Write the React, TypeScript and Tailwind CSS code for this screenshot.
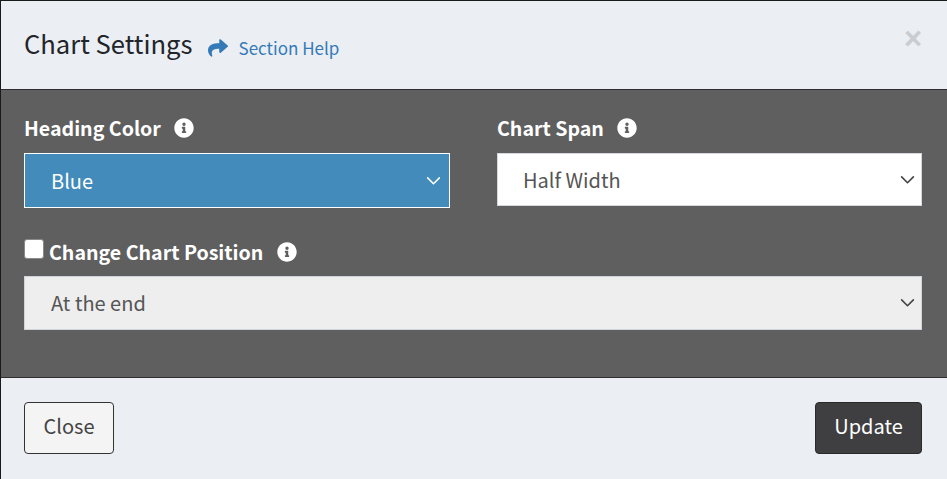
function Info() {
  return (
    <svg viewBox="0 0 512 512" className="w-[20px] h-[20px] fill-white shrink-0">
      <path d="M256 8C119 8 8 119 8 256s111 248 248 248 248-111 248-248S393 8 256 8zm0 110c23.200 0 42 18.800 42 42s-18.800 42-42 42-42-18.800-42-42 18.800-42 42-42zm56 254c0 6.600-5.400 12-12 12h-88c-6.600 0-12-5.400-12-12v-24c0-6.600 5.400-12 12-12h12v-64h-12c-6.600 0-12-5.400-12-12v-24c0-6.600 5.400-12 12-12h64c6.600 0 12 5.400 12 12v100h12c6.600 0 12 5.400 12 12v24z" />
    </svg>
  );
}
function Chevron({ cls }: { cls: string }) {
  return (
    <svg viewBox="0 0 16 10" className={"absolute top-1/2 -translate-y-1/2 w-[15px] h-[9px] fill-none pointer-events-none " + cls} strokeWidth="1.8" strokeLinecap="round" strokeLinejoin="round">
      <path d="M1.500 1.500 L8 8 L14.500 1.500" />
    </svg>
  );
}
function Select({ value, wrap, box, chev }: { value: string; wrap: string; box: string; chev: string }) {
  return (
    <div className={"relative " + wrap}>
      <select defaultValue={value} className={"block w-full appearance-none rounded-none outline-none border text-[20px] leading-[30px] " + box}>
        <option>{value}</option>
      </select>
      <Chevron cls={chev} />
    </div>
  );
}
export default function App() {
  return (
    <div className="w-[947px] h-[479px] bg-[#1a1a1a] overflow-hidden font-['Noto_Sans_CJK_SC','Noto_Sans',sans-serif]">
      <div className="w-[946px] h-[478px] ml-[1px] mt-[1px] flex flex-col">
        <header className="h-[89px] shrink-0 bg-[#ebeef3] border-b border-[#2e2e2e] flex items-start pl-[23px] pr-[25px]">
          <h1 className="text-[25.6px] leading-[40px] mt-[22px] text-[#212529] font-normal">Chart Settings</h1>
          <a className="flex items-center ml-[15px] mt-[31px] text-[#337ab7] text-[17px] leading-[32px]">
            <svg viewBox="0 0 512 512" className="w-[20px] h-[20px] fill-[#337ab7] mr-[11px]">
              <path d="M503.700 189.800 327.700 37.900C312.300 24.600 288 35.400 288 56v80.100C127.400 137.900 0 170.100 0 322.300c0 61.400 39.600 122.300 83.300 154.100 13.700 9.900 33.100-2.500 28.100-18.600C66 312.300 132.900 274.300 288 272.100V360c0 20.700 24.300 31.400 39.700 18.200l176-152c11.100-9.600 11.100-26.800 0-36.400z" />
            </svg>
            Section Help
          </a>
          <span className="ml-auto mt-[20px] text-[31px] leading-[36px] font-bold font-['Liberation_Sans'] text-[#c9ccd0]">×</span>
        </header>
        <main className="h-[288px] shrink-0 bg-[#5f5f5f] border-b border-[#2e2e2e] pt-[23px] pl-[23px] pr-[24px]">
          <div className="flex gap-[47px]">
            <div className="w-[426px]">
              <div className="flex items-center h-[30px] gap-[13px] text-white font-bold text-[19.6px] leading-[30px]">
                Heading Color <Info />
              </div>
              <Select value="Blue" wrap="mt-[10px]" box="h-[55px] pl-[26px] bg-[#428bba] border-white text-white" chev="stroke-white right-[9px]" />
            </div>
            <div className="w-[425px]">
              <div className="flex items-center h-[30px] gap-[13px] text-white font-bold text-[19.6px] leading-[30px]">
                Chart Span <Info />
              </div>
              <Select value="Half Width" wrap="mt-[10px]" box="h-[53px] pl-[25px] bg-white border-[#d5d8dc] text-[#555555]" chev="stroke-[#444444] right-[7px]" />
            </div>
          </div>
          <div className="flex items-center h-[30px] mt-[29px] text-white font-bold text-[19.6px] leading-[30px]">
            <span className="w-[20px] h-[20px] mb-[6px] bg-white rounded-[3px] border border-[#8a8a8a] mr-[5px] shrink-0" />
            Change Chart Position
            <span className="ml-[14px]"><Info /></span>
          </div>
          <Select value="At the end" wrap="mt-[9px] w-[898px]" box="h-[54px] pl-[26px] bg-[#eeeeee] border-[#ced4da] text-[#555555]" chev="stroke-[#444444] right-[7px]" />
        </main>
        <footer className="flex-1 bg-[#ebeef3] flex items-start justify-between pt-[24px] pl-[23px] pr-[25px]">
          <button className="w-[90px] h-[52px] pb-[4px] bg-[#f4f4f4] border border-[#333333] rounded-[4px] text-[#444444] text-[20px] leading-[30px]">Close</button>
          <button className="w-[107px] h-[52px] pb-[4px] bg-[#3f3f41] border border-[#2a2a2a] rounded-[4px] text-white text-[20px] leading-[30px]">Update</button>
        </footer>
      </div>
    </div>
  );
}
